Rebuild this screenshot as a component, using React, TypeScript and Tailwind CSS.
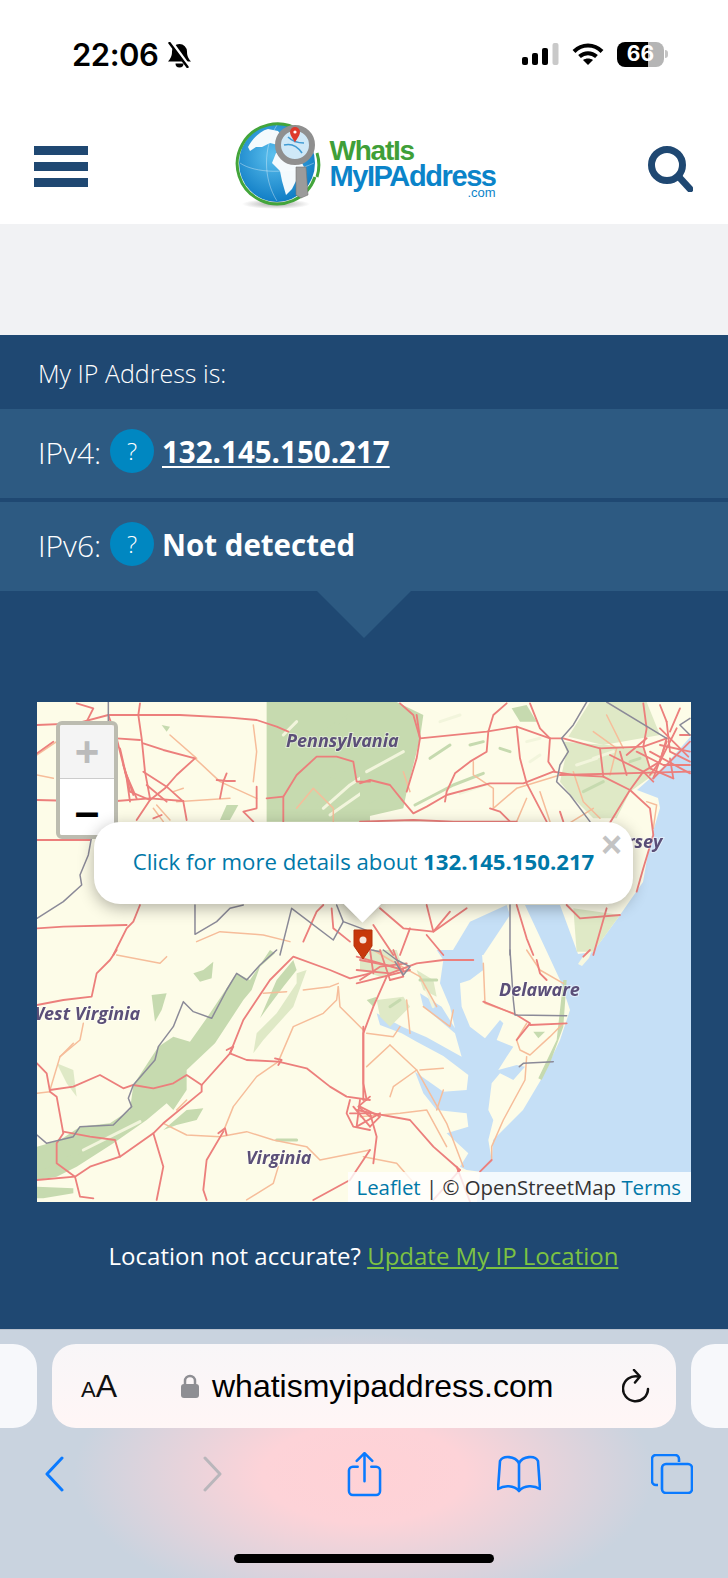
import type { ReactNode } from "react";

// map pieces are traced per quadrant, in the px of a 3x crop of that quadrant
const quads = [
  {
    t: "translate(-7 -7) scale(.3333)",
    water: [] as string[],
    pale: [] as string[],
    forest: ["710,21 1020,21 1020,380 710,380", "590,330 625,330 600,375 570,375", "395,90 420,95 410,110"],
    ridges: ["800,350 870,275 950,220", "880,340 960,270 1020,230", "960,370 1020,320", "760,120 800,80", "850,130 960,60", "900,360 1000,290", "820,370 900,300"],
    minor: ["495,190 570,260 680,310", "670,90 680,170 670,260", "440,320 600,310", "800,340 850,280 910,340 910,380", "500,740 570,710 700,720 780,740", "370,340 400,380", "430,290 460,280", "21,180 80,140 140,85", "380,330 420,375", "21,240 70,250", "420,120 500,190"],
    major: ["21,90 140,85 235,60 330,60 450,60 600,68 680,75 740,95 775,110", "330,25 325,60 335,130 345,230 360,310", "235,60 260,130 290,250 300,320", "340,145 400,165 495,190 440,240 405,280 360,315", "21,315 140,318 260,318 360,310 460,318", "260,130 330,135", "340,230 410,275 460,320 470,375", "300,290 360,315 320,375", "680,275 680,340 640,350 670,380", "760,380 760,305 800,240 860,185 920,185 970,200 980,260 1020,260", "560,255 590,258 615,258", "590,235 580,260 570,310", "710,310 760,305", "21,435 180,435", "330,630 310,680 290,700 250,780", "21,700 100,695 290,690", "820,740 860,650 880,630", "905,640 910,700 960,740", "140,25 190,40 170,80", "21,175 70,140", "280,210 310,300", "370,370 395,360", "285,230 320,310", "350,270 410,320", "270,160 300,290"],
    border: ["235,21 235,85", "185,425 175,480 150,540 155,570 100,620 21,670", "495,630 495,718 560,680 600,640 640,630", "750,780 770,700 785,640 910,735 940,680 920,630", "940,680 1020,710"],
  },
  {
    t: "translate(323 -7) scale(.3333)",
    water: ["270,780 330,680 440,630 450,660 370,780"],
    pale: ["610,140 740,150 850,160 880,240 810,290 770,370 700,370 640,310 600,260 620,170", "690,21 860,21 900,120 730,150 625,125", "640,640 780,660 700,770 650,770"],
    forest: ["0,21 110,21 190,60 180,130 140,290 130,340 0,370", "455,40 500,30 530,80 480,80"],
    ridges: ["165,330 280,270 370,235", "300,295 385,265", "210,190 270,150", "240,80 300,60", "330,150 370,140", "500,140 540,130", "420,160 450,170", "540,180 510,200", "670,290 730,260", "700,190 760,170", "810,200 840,190", "20,230 130,170", "30,320 120,260", "650,210 710,190"],
    minor: ["400,340 470,280 600,240", "340,200 340,240 400,280 400,340", "500,310 470,380", "540,290 570,380", "150,290 130,230", "860,320 890,330 880,400", "700,110 770,160 750,240", "640,230 670,320 720,370", "740,60 790,160", "620,390 700,340"],
    major: ["0,265 30,255 90,270 130,320 160,355 200,335 260,300 390,265 490,265 580,230 640,240 730,245 810,285", "170,60 180,130 380,110 470,95 570,130 610,130 720,160 850,155 920,130", "120,25 160,60 180,130 170,190 140,290", "440,25 400,60 385,110 380,170 330,200 285,235 260,290 255,320", "470,95 480,190 500,265 560,380", "570,130 565,200 585,230", "510,25 540,100 570,130", "920,130 900,200 850,230 810,285 770,350 740,400", "810,285 870,340 880,420 850,520 830,590", "920,80 930,170 990,200", "600,240 990,230", "850,25 860,100 850,155", "750,180 850,230 880,260", "0,380 160,375 280,380 470,380", "200,630 220,710 270,650", "470,630 500,730 520,780", "620,630 660,670 780,660", "700,780 740,640", "390,340 420,350 450,380", "600,350 610,380", "900,150 990,170", "830,170 910,210 990,210", "920,140 880,250", "950,100 900,200 870,240", "960,40 930,110", "60,640 130,700 220,710 320,640", "40,690 100,780", "150,700 120,780", "200,720 250,780", "780,170 800,240", "720,160 730,245", "850,155 870,220 940,250", "900,30 920,80", "880,250 990,140", "870,170 990,235", "900,100 985,185", "930,190 940,250", "800,180 860,130", "960,120 990,120"],
    border: ["680,21 640,90 605,130 625,170 600,210 590,260 630,300 690,380", "740,21 920,130", "450,630 450,780", "990,70 960,90 990,120", "60,770 10,760"],
  },
  {
    t: "translate(-7 248) scale(.3333)",
    water: [] as string[],
    pale: ["670,310 680,250 740,190 800,100 800,70 830,60 790,170 700,270", "80,340 130,360 140,440 110,400"],
    forest: ["720,0 735,10 690,50 665,120 640,150 555,280 470,360 470,420 430,480 410,460 350,510 250,580 140,650 80,680 21,690 21,590 90,570 150,530 240,520 300,480 310,405 385,290 430,260 480,275 530,205 620,70 660,90", "365,135 410,130 395,180 375,215", "400,540 470,480 520,475 500,510 440,525", "21,710 130,715 130,730 40,745 21,745", "690,205 740,90 790,30 800,60 760,110 715,170", "490,70 520,60 550,35 545,85 510,95"],
    ridges: ["30,670 140,610 250,560", "160,600 330,515", "740,570 800,570"],
    minor: ["400,520 470,555 570,560 650,545 730,570 830,590 870,630 1020,600", "580,545 610,470 680,380 745,335 790,230 880,190 920,150 925,110", "260,15 390,40 410,20", "130,280 90,320 60,420", "745,650 730,700 650,750", "160,220 150,270 90,320", "820,120 900,110 925,100", "925,110 930,170 1000,240", "700,130 770,125", "440,480 470,450", "21,430 60,425"],
    major: ["260,0 240,30 200,70 185,140 100,150 21,165", "21,340 50,370 60,425 80,440 100,550 80,580 80,640 135,680 150,740 190,745", "60,420 130,410 210,375 280,415 310,405 370,415 430,400 470,375 515,405 515,425 400,520 370,550 270,620 180,650 135,680 21,690", "515,405 600,310 640,210 720,90 790,20 900,60 960,85 1020,70", "600,310 650,330 745,335 830,355 900,410 950,440 1020,450", "370,550 400,650 380,750", "270,620 255,570 180,560 100,545", "580,545 530,630 520,720 530,750", "1000,230 1000,450", "850,750 960,690 1020,600", "960,450 950,490 970,530 1020,540", "990,450 980,530", "960,490 1020,490", "590,300 610,290 600,310", "735,325 755,330 745,345", "565,550 585,535 590,555", "1020,500 985,470 1020,440"],
    border: ["740,0 690,45 650,90 620,70 590,120 545,205 490,185 460,155 430,230 385,290 375,330 310,405 295,445 305,470 250,525 150,530 130,560 50,580 21,555"],
  },
  {
    t: "translate(323 248) scale(.3333)",
    water: ["230,0 365,0 370,60 330,90 300,100 305,170 330,230 375,265 420,210 430,220 410,270 460,290 440,320 415,360 470,345 495,350 460,390 420,370 395,400 385,480 400,510 385,570 395,630 360,665 320,660 300,650 325,610 260,550 325,530 320,490 230,480 190,430 165,365 250,425 320,420 325,375 250,318 170,275 125,250 60,225 50,190 130,232 200,262 305,320 285,250 190,170 180,130 245,170 285,235 270,170 240,100 250,30"],
    pale: ["50,150 130,140 150,170 90,230 60,200", "170,60 220,90 230,140 190,120", "0,0 110,0 130,60 60,80 0,60"],
    forest: ["20,150 50,140 40,170", "520,245 555,245 535,265", "610,90 620,90 610,230 570,340 545,390 535,385 590,270"],
    ridges: ["180,90 230,90", "200,120 220,170", "90,170 120,150"],
    minor: ["370,40 375,160 460,190", "500,0 540,60 610,100", "500,220 470,270 480,300 510,315 570,260 610,220", "500,320 495,390 430,510 395,590 395,630", "90,285 20,350", "90,285 170,360 260,520 310,650", "170,360 100,410 90,440", "180,360 250,355", "0,500 120,490 200,480 260,590", "230,480 250,420", "190,170 270,230 280,180", "20,250 100,260 120,230", "40,0 90,30 180,80 230,170", "140,150 150,250", "10,620 110,640 180,720"],
    major: ["-10,60 90,70 170,40 250,30 340,30", "80,80 40,170 10,250 10,400 20,450", "-10,20 130,60", "370,155 470,195 510,220 470,270", "-10,480 40,490 150,510 220,590 300,660", "30,490 50,560 40,640", "-10,530 60,490", "360,665 395,630", "-10,100 150,60", "30,0 40,70", "100,0 130,80 90,90", "0,90 60,50 140,40", "670,20 690,0", "510,225 620,220", "530,30 540,70 560,90", "-20,470 30,530", "290,650 330,755", "220,750 300,660", "0,30 100,50", "60,0 90,90", "0,470 60,500 30,530"],
    border: ["450,0 460,150 465,195 620,197", "478,350 490,340 580,335", "70,0 110,30 150,50 130,75 105,35"],
  },
];

const MapTiles = () => (
  <svg viewBox="0 0 654 500" className="absolute inset-0 w-[654px] h-[500px] blur-[0.6px]">
    <rect width="654" height="500" fill="#fdfce8" />
    <polygon fill="#c5dff6" points="654,34 640,50 625,66 600,88 621,96 623,106 613,140 606,180 583,213 556,250 541,252 523,203 488,203 510,250 523,278 533,308 523,338 505,376 486,408 456,438 455,458 443,470 440,500 654,500" />
    <polygon fill="#f7f8e0" points="541,262 549,250 556,246 552,256 545,264" />
    {quads.map((q) => (
      <g key={q.t} transform={q.t} fill="none" strokeLinejoin="round" strokeLinecap="round">
        {q.water.map((p) => <polygon key={p} points={p} fill="#c5dff6" />)}
        {q.pale.map((p) => <polygon key={p} points={p} fill="#dfe9c6" />)}
        {q.forest.map((p) => <polygon key={p} points={p} fill="#c6daaf" />)}
        {q.ridges.map((p, i) => (
          <polyline key={p} points={p} stroke={i % 2 ? "#f2f5dc" : "#c6daaf"} strokeWidth="9" />
        ))}
        {q.minor.map((p) => <polyline key={p} points={p} stroke="#f6bd9a" strokeWidth="4.500" />)}
      </g>
    ))}
    {quads.map((q) => (
      <g key={q.t + "r"} transform={q.t} fill="none" strokeLinejoin="round" strokeLinecap="round">
        {q.major.map((p) => <polyline key={p} points={p} stroke="#ec7f7c" strokeWidth="5.500" />)}
        {q.border.map((p) => <polyline key={p} points={p} stroke="#8b8a98" strokeWidth="4.500" />)}
      </g>
    ))}
    <g fontFamily="'Open Sans', sans-serif" fontWeight="700" fontStyle="italic" fontSize="18" fill="#5b4f78" stroke="#ffffff" strokeOpacity=".45" strokeWidth="2" paintOrder="stroke">
      <text x="249" y="45">Pennsylvania</text>
      <text x="590" y="146">rsey</text>
      <text x="-9" y="318">West Virginia</text>
      <text x="209" y="462">Virginia</text>
      <text x="462" y="294">Delaware</text>
    </g>
    <path d="M317 228h18v16l-9 13-9-13z" fill="#c8380c" stroke="#b5300a" strokeWidth="1" />
    <circle cx="326" cy="238" r="3.500" fill="#f6e4dc" />
  </svg>
);

const Globe = () => (
  <svg viewBox="0 0 90 90" className="w-[90px] h-[90px]">
    <defs>
      <radialGradient id="sea" cx="45%" cy="40%" r="65%">
        <stop offset="0%" stopColor="#5cc0ee" />
        <stop offset="100%" stopColor="#0a78c2" />
      </radialGradient>
      <radialGradient id="drop">
        <stop offset="0%" stopColor="#a8a8a8" />
        <stop offset="100%" stopColor="#ffffff" />
      </radialGradient>
    </defs>
    <ellipse cx="42" cy="83" rx="34" ry="5" fill="url(#drop)" />
    <ellipse cx="43" cy="42" rx="38" ry="39" fill="url(#sea)" />
    <path d="M14 26c4-8 12-16 20-18l10 2 6 8-6 6-8-2-8 4-6 0-6 4zM42 32l12 0 12 6 4 8-4 6-8 16-6 6-4-14-2-10-8-8z" fill="#f4fafd" />
    <path d="M6 42c14 10 50 12 74 0M43 4c-14 22-14 54 0 76" fill="none" stroke="#ffffff" strokeOpacity=".45" strokeWidth=".8" />
    <path d="M66 10A40 40 0 1 0 81 56" fill="none" stroke="#43a53b" strokeWidth="3" />
    <path d="M83 32a40 40 0 0 1 0 24" fill="none" stroke="#43a53b" strokeWidth="3" />
    <circle cx="61" cy="24" r="17" fill="#cfe8f7" stroke="#8f8f8f" strokeWidth="6" />
    <path d="M50 24c8-2 14 2 18 8M54 16c6 6 12 6 16 6" fill="none" stroke="#3f9bd4" strokeWidth="1.600" />
    <path d="M61 6a5 5 0 0 1 5 5c0 4-5 9-5 11 0-2-5-7-5-11a5 5 0 0 1 5-5z" fill="#de3a2c" />
    <circle cx="61" cy="11" r="1.600" fill="#fff" />
    <path d="M62 46h10l2 28-7 3-5-3z" fill="#9b9b9b" stroke="#777" strokeWidth=".6" />
  </svg>
);

const StatusBar = () => (
  <div className="h-[100px] flex justify-between items-start pt-[41px] pl-[72px] pr-[60px] text-black">
    <div className="flex items-center gap-[9px]">
      <span className="font-['Inter',sans-serif] font-semibold text-[31px] leading-[28px] tracking-[-0.5px]">22:06</span>
      <svg viewBox="0 0 25 26" className="w-[25px] h-[26px]">
        <path d="M12.500 2a7.500 7.500 0 0 0-7.500 7.500c0 5-1.500 7-4 10h23c-2.500-3-4-5-4-10A7.500 7.500 0 0 0 12.500 2z" fill="#000" />
        <path d="M8.500 21.500a4 4 0 0 0 8 0z" fill="#000" />
        <path d="M4 0l18 25" stroke="#fff" strokeWidth="4" />
        <path d="M2.500 1l18 24" stroke="#000" strokeWidth="2.400" strokeLinecap="round" />
      </svg>
    </div>
    <div className="flex items-center gap-[13px] h-[26px]">
      <svg viewBox="0 0 37 22" className="w-[37px] h-[22px]">
        <rect x="0" y="14" width="6" height="8" rx="2" fill="#000" />
        <rect x="10" y="10" width="6" height="12" rx="2" fill="#000" />
        <rect x="20" y="5" width="6" height="17" rx="2" fill="#000" />
        <rect x="30.500" y="0" width="6" height="22" rx="2" fill="#c9c9c9" />
      </svg>
      <svg viewBox="0 0 32 22" className="w-[32px] h-[22px]" fill="none" stroke="#000" strokeWidth="4">
        <path d="M2 8.500c8-8 20-8 28 0" />
        <path d="M7.500 13.500c5-4.500 12-4.500 17 0" />
        <path d="M16 22l-5-5c3-2 7-2 10 0z" fill="#000" stroke="none" />
      </svg>
      <div className="flex items-center">
        <div className="relative w-[47px] h-[25px] rounded-[8px] overflow-hidden flex">
          <div className="w-[31px] bg-black" />
          <div className="flex-1 bg-[#b5b5b5]" />
          <span className="absolute inset-0 flex items-center justify-center font-['Inter',sans-serif] font-bold text-[21px] text-white">66</span>
        </div>
        <div className="w-[3px] h-[8px] ml-[1px] rounded-r-full bg-[#c4c4c4]" />
      </div>
    </div>
  </div>
);

const Header = () => (
  <div className="h-[124px] flex items-start justify-between pl-[34px] pr-[35px] bg-white">
    <div className="flex flex-col gap-[7px] pt-[46px]">
      <div className="w-[54px] h-[9px] bg-[#1f4872]" />
      <div className="w-[54px] h-[9px] bg-[#1f4872]" />
      <div className="w-[54px] h-[9px] bg-[#1f4872]" />
    </div>
    <div className="flex items-start pt-[21px] -ml-[6px]">
      <Globe />
      <div className="flex flex-col pt-[17px] ml-[5px] font-['Liberation_Sans',sans-serif] font-bold">
        <span className="text-[28px] leading-[25px] tracking-[-1.2px] text-[#3f9f38]">WhatIs</span>
        <span className="text-[29px] leading-[26px] tracking-[-1.4px] text-[#0b84c9]">MyIPAddress</span>
        <span className="text-[13px] leading-[8px] font-normal text-right text-[#0b84c9]">.com</span>
      </div>
    </div>
    <svg viewBox="0 0 45 46" className="w-[45px] h-[46px] mt-[46px]" fill="none" stroke="#1f4872">
      <circle cx="19" cy="19" r="15.500" strokeWidth="7" />
      <path d="M31 31l11 12" strokeWidth="7" strokeLinecap="round" />
    </svg>
  </div>
);

const IpRow = ({ label, children }: { label: string; children: ReactNode }) => (
  <div className="h-[89px] bg-[#2d5a82] flex items-center pl-[38px] pb-[2px] text-white">
    <span className="font-light text-[30px] w-[72px]">{label}</span>
    <span className="w-[44px] h-[44px] -mt-[4px] rounded-full bg-[#0087c1] flex items-center justify-center font-light text-[24px] mr-[8px]">?</span>
    {children}
  </div>
);

const MapBox = () => (
  <div className="relative w-[654px] h-[500px] mx-[37px] overflow-hidden">
    <MapTiles />
    {/* zoom buttons */}
    <div className="absolute left-[19px] top-[19px] w-[62px] h-[118px] border-4 border-[#bcbcb0] rounded-[6px] flex flex-col overflow-hidden font-['Liberation_Sans',sans-serif] font-bold">
      <div className="h-[54px] bg-[#f4f4f4] border-b border-[#cccccc] text-[#bbbbbb] text-[42px] flex items-center justify-center">+</div>
      <div className="flex-1 bg-white text-black text-[44px] pb-[4px] flex items-center justify-center">–</div>
    </div>
    {/* popup */}
    <div className="absolute left-[57px] top-[120px] w-[539px] h-[82px]">
      <div className="absolute left-[255px] top-[68px] w-[27px] h-[27px] rotate-45 bg-white shadow-[0_3px_14px_rgba(0,0,0,0.3)]" />
      <div className="relative h-full bg-white rounded-[26px] shadow-[0_4px_16px_rgba(0,0,0,0.3)] flex items-center justify-center text-[#0078a8] text-[22.200px] pb-[3px]">
        <span>Click for more details about <b className="font-bold">132.145.150.217</b></span>
      </div>
      <div className="absolute left-[255px] top-[68px] w-[27px] h-[27px] rotate-45 bg-white" />
      <span className="absolute right-[11px] top-[8px] font-['Liberation_Sans',sans-serif] font-bold text-[36px] leading-[30px] text-[#c3c3c3]">×</span>
    </div>
    {/* attribution */}
    <div className="absolute right-0 bottom-0 h-[30px] w-[343px] bg-white/80 flex items-center justify-end pr-[10px] text-[20.400px] text-[#333333] whitespace-nowrap">
      <span className="text-[#0078a8]">Leaflet</span>
      <span>&nbsp;| © OpenStreetMap&nbsp;</span>
      <span className="text-[#0078a8]">Terms</span>
    </div>
  </div>
);

const SafariBar = () => (
  <div className="h-[249px] border-t border-[#b9c2cf] bg-[radial-gradient(ellipse_290px_140px_at_50%_58%,#ffd2d6_0%,#fdd3d8_35%,#c9d3df_100%)] flex flex-col font-['Liberation_Sans',sans-serif]">
    <div className="flex gap-[15px] pt-[14px]">
      <div className="w-[37px] h-[84px] rounded-r-[24px] bg-[#f7f8fb]" />
      <div className="w-[624px] h-[84px] rounded-[24px] bg-gradient-to-b from-[#f8f6f8] to-[#fff6f6] flex items-center pl-[29px] pr-[26px] shrink-0">
        <span className="text-[#111] w-[100px]"><span className="text-[22px]">A</span><span className="text-[32px]">A</span></span>
        <svg viewBox="0 0 18 24" className="w-[18px] h-[24px] mr-[13px]">
          <path d="M4 11V7a5 5 0 0 1 10 0v4" fill="none" stroke="#8e8e93" strokeWidth="2.500" />
          <rect y="10" width="18" height="14" rx="3" fill="#8e8e93" />
        </svg>
        <span className="text-[32px] text-black flex-1">whatismyipaddress.com</span>
        <svg viewBox="0 0 28 34" className="w-[28px] h-[34px]" fill="none" stroke="#111" strokeWidth="2.500" strokeLinecap="round" strokeLinejoin="round">
          <path d="M16 7.500A12.500 12.500 0 1 0 26 20" />
          <path d="M12 1l6 6.500-5 6" />
        </svg>
      </div>
      <div className="w-[37px] h-[84px] rounded-l-[24px] bg-[#f7f8fb] shrink-0" />
    </div>
    <div className="flex items-center pl-[44px] h-[92px] text-[#0a7aff]">
      <svg viewBox="0 0 20 36" className="w-[20px] h-[36px]" fill="none" stroke="currentColor" strokeWidth="3" strokeLinecap="round" strokeLinejoin="round">
        <path d="M18 2L3 18l15 16" />
      </svg>
      <svg viewBox="0 0 20 36" className="w-[20px] h-[36px] ml-[139px]" fill="none" stroke="#b9b6bb" strokeWidth="3" strokeLinecap="round" strokeLinejoin="round">
        <path d="M2 2l15 16L2 34" />
      </svg>
      <svg viewBox="0 0 36 46" className="w-[35px] h-[45px] ml-[124px]" fill="none" stroke="currentColor" strokeWidth="2.600" strokeLinecap="round" strokeLinejoin="round">
        <path d="M11 15H6a4 4 0 0 0-4 4v21a4 4 0 0 0 4 4h24a4 4 0 0 0 4-4V19a4 4 0 0 0-4-4h-5" />
        <path d="M18 30V2M10 9l8-8 8 8" />
      </svg>
      <svg viewBox="0 0 44 38" className="w-[44px] h-[38px] ml-[115px]" fill="none" stroke="currentColor" strokeWidth="2.600" strokeLinejoin="round">
        <path d="M22 8C18 1 6 0 3 6L1 34c6-4 16-4 21 2 5-6 15-6 21-2L41 6c-3-6-15-5-19 2z" />
        <path d="M22 8v28" />
      </svg>
      <svg viewBox="0 0 42 40" className="w-[42px] h-[40px] ml-[110px]" fill="none" stroke="currentColor" strokeWidth="2.600">
        <path d="M7 31H5a4 4 0 0 1-4-4V5a4 4 0 0 1 4-4h19a4 4 0 0 1 4 4v3" />
        <rect x="11" y="10" width="30" height="29" rx="4" />
      </svg>
    </div>
    <div className="flex justify-center pt-[34px]">
      <div className="w-[260px] h-[9px] rounded-full bg-black" />
    </div>
  </div>
);

export default function App() {
  return (
    <div className="w-[728px] h-[1578px] flex flex-col overflow-hidden bg-white font-['Open_Sans',sans-serif]">
      <StatusBar />
      <Header />
      <div className="h-[111px] bg-[#f1f2f4]" />
      <div className="h-[994px] bg-[#1f4872] text-white">
        <div className="h-[74px] flex items-center pl-[38px] pt-[3px] text-[25px] font-light">My IP Address is:</div>
        <IpRow label="IPv4:">
          <span className="font-bold text-[29.500px] underline underline-offset-[3px]">132.145.150.217</span>
        </IpRow>
        <div className="h-[4px]" />
        <IpRow label="IPv6:">
          <span className="font-bold text-[29.500px]">Not detected</span>
        </IpRow>
        <div className="flex justify-center h-[111px] pr-[1px]">
          <svg viewBox="0 0 94 47" className="w-[94px] h-[47px]">
            <polygon points="0,0 94,0 47,47" fill="#2d5a82" />
          </svg>
        </div>
        <MapBox />
        <div className="pt-[36px] text-center text-[24px] pr-[1px]">
          Location not accurate? <span className="text-[#7dc242] underline">Update My IP Location</span>
        </div>
      </div>
      <SafariBar />
    </div>
  );
}
